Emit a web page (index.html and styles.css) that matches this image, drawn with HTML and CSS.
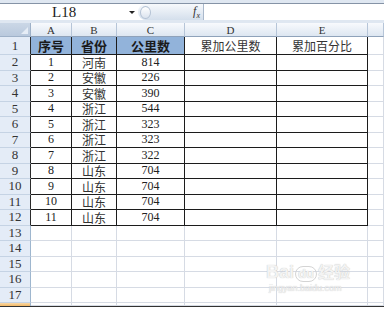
FILE: index.html
```html
<!DOCTYPE html>
<html>
<head>
    <title>Sheet1</title>
    <link rel="stylesheet" href="styles.css">
</head>
<body>
    <div class="bar">
        <div class="bar-inner">
            <div class="namebox">L18</div>
            <div class="drop"><span class="arrow"></span></div>
            <div class="ctrl">
                <span class="knob"></span>
                <span class="fx"><i>f</i><sub>x</sub></span>
            </div>
            <div class="input"></div>
        </div>
    </div>

    <div class="sheet">
        <div class="corner"><span class="tri"></span></div>
        <div class="ch">A</div><div class="ch">B</div><div class="ch">C</div><div class="ch">D</div><div class="ch">E</div><div class="ch"></div>

        <div class="rh edge">1</div><div class="c hd">序号</div><div class="c hd">省份</div><div class="c hd">公里数</div><div class="c t cn">累加公里数</div><div class="c t cn">累加百分比</div><div class="c"></div>
        <div class="rh edge">2</div><div class="c t">1</div><div class="c t cn">河南</div><div class="c t">814</div><div class="c t"></div><div class="c t"></div><div class="c"></div>
        <div class="rh edge">3</div><div class="c t">2</div><div class="c t cn">安徽</div><div class="c t">226</div><div class="c t"></div><div class="c t"></div><div class="c"></div>
        <div class="rh edge">4</div><div class="c t">3</div><div class="c t cn">安徽</div><div class="c t">390</div><div class="c t"></div><div class="c t"></div><div class="c"></div>
        <div class="rh edge">5</div><div class="c t">4</div><div class="c t cn">浙江</div><div class="c t">544</div><div class="c t"></div><div class="c t"></div><div class="c"></div>
        <div class="rh edge">6</div><div class="c t">5</div><div class="c t cn">浙江</div><div class="c t">323</div><div class="c t"></div><div class="c t"></div><div class="c"></div>
        <div class="rh edge">7</div><div class="c t">6</div><div class="c t cn">浙江</div><div class="c t">323</div><div class="c t"></div><div class="c t"></div><div class="c"></div>
        <div class="rh edge">8</div><div class="c t">7</div><div class="c t cn">浙江</div><div class="c t">322</div><div class="c t"></div><div class="c t"></div><div class="c"></div>
        <div class="rh edge">9</div><div class="c t">8</div><div class="c t cn">山东</div><div class="c t">704</div><div class="c t"></div><div class="c t"></div><div class="c"></div>
        <div class="rh edge">10</div><div class="c t">9</div><div class="c t cn">山东</div><div class="c t">704</div><div class="c t"></div><div class="c t"></div><div class="c"></div>
        <div class="rh edge">11</div><div class="c t">10</div><div class="c t cn">山东</div><div class="c t">704</div><div class="c t"></div><div class="c t"></div><div class="c"></div>
        <div class="rh edge">12</div><div class="c t">11</div><div class="c t cn">山东</div><div class="c t">704</div><div class="c t"></div><div class="c t"></div><div class="c"></div>
        <div class="rh">13</div><div class="c"></div><div class="c"></div><div class="c"></div><div class="c"></div><div class="c"></div><div class="c"></div>
        <div class="rh">14</div><div class="c"></div><div class="c"></div><div class="c"></div><div class="c"></div><div class="c"></div><div class="c"></div>
        <div class="rh">15</div><div class="c"></div><div class="c"></div><div class="c"></div><div class="c"></div><div class="c"></div><div class="c"></div>
        <div class="rh">16</div><div class="c"></div><div class="c"></div><div class="c"></div><div class="c"></div><div class="c"></div><div class="c"></div>
        <div class="rh">17</div><div class="c"></div><div class="c"></div><div class="c"></div><div class="c"></div><div class="c"></div><div class="c"></div>
        <div class="rh sel"></div><div class="c"></div><div class="c"></div><div class="c"></div><div class="c"></div><div class="c"></div><div class="c"></div>
    </div>

    <div class="watermark">
        <div class="wm-logo">Bai<span class="wm-du">du</span><span class="wm-cn">经验</span></div>
        <div class="wm-url">jingyan.baidu.com</div>
    </div>
</body>
</html>
```

FILE: styles.css
```css
body {
    margin: 0;
    width: 384px;
    height: 309px;
    overflow: hidden;
    background: #fff;
    font-family: "Liberation Serif", "Noto Sans CJK SC", serif;
    color: #222;
    position: relative;
}
.bar {
    height: 23px;
    box-sizing: border-box;
    padding-top: 3px;
    background: #dfe7f1;
}
.bar-inner {
    display: flex;
    height: 17px;
    background: #fff;
    border-top: 1px solid #8593a6;
    box-sizing: border-box;
}
.namebox {
    flex: 0 0 125px;
    text-align: left;
    font-family: "Liberation Serif", serif;
    font-size: 15px;
    line-height: 16px;
    color: #222;
    padding-left: 52px;
    box-sizing: border-box;
}
.drop {
    flex: 0 0 13px;
    display: flex;
    align-items: center;
    justify-content: center;
}
.arrow {
    width: 0;
    height: 0;
    border-left: 3px solid transparent;
    border-right: 3px solid transparent;
    border-top: 3px solid #222;
}
.ctrl {
    flex: 0 0 65px;
    display: flex;
    align-items: center;
    justify-content: space-between;
    background: linear-gradient(#f7f9fc, #d4dfec);
    border-radius: 8px 0 0 8px;
    padding: 0 3px 0 2px;
    box-sizing: border-box;
}
.knob {
    width: 11px;
    height: 13px;
    border-radius: 50%;
    border: 1px solid #b4c2d4;
    background: linear-gradient(#ffffff, #dbe3ee);
    box-sizing: border-box;
}
.fx {
    font-size: 12px;
    color: #333;
}
.fx sub {
    font-size: 8px;
    font-style: italic;
}
.input {
    flex: 1;
    border-left: 1px solid #a9b8cb;
    background: #fff;
}
.sheet {
    display: grid;
    grid-template-columns: 31px 41px 45px 68px 92px 91px 1fr;
    grid-template-rows: 14px 18px repeat(16, 15.5px) 3px;
    border-bottom: 1px solid #333;
}
.sheet > div {
    box-sizing: border-box;
    display: flex;
    align-items: center;
    justify-content: center;
    overflow: hidden;
}
.corner {
    background: linear-gradient(#cbd7e6, #b9c9dd);
    border-right: 1px solid #9eb1c8;
    border-bottom: 1px solid #9eb1c8;
    position: relative;
}
.tri {
    position: absolute;
    right: 2px;
    bottom: 2px;
    width: 0;
    height: 0;
    border-left: 7px solid transparent;
    border-bottom: 7px solid #e6edf6;
}
.ch {
    background: linear-gradient(#f8fafd, #dde6f1);
    border-right: 1px solid #b6c5d8;
    border-bottom: 1px solid #8fa2ba;
    font-size: 11px;
    color: #333;
}
.rh {
    background: #e4ecf7;
    border-right: 1px solid #9eb6ce;
    border-bottom: 1px solid #c5d3e4;
    font-size: 13px;
    color: #333;
}
.rh.edge {
    border-right-color: #2a2a2a;
}
.rh.sel {
    background: linear-gradient(#f9d9a8, #f3b866);
    border-bottom: none;
}
.c {
    border-right: 1px solid #d6dbe4;
    border-bottom: 1px solid #d6dbe4;
    font-size: 12px;
    color: #222;
}
.c.t {
    border-right-color: #1c1c1c;
    border-bottom-color: #1c1c1c;
}
.c.hd {
    background: #92b3da;
    border-right: 1px solid #1c1c1c;
    border-bottom: 1px solid #1c1c1c;
    font-family: "Noto Sans CJK SC", sans-serif;
    font-weight: bold;
    font-size: 13px;
    color: #1a1a1a;
}
.cn {
    font-family: "Noto Sans CJK SC", sans-serif;
    font-size: 12px;
    color: #333;
}
.watermark {
    position: absolute;
    left: 266px;
    top: 262px;
    color: #f3f3f3;
    text-shadow: 0 0 1px #b9b9b9;
    font-family: "Liberation Sans", "Noto Sans CJK SC", sans-serif;
    pointer-events: none;
}
.wm-logo {
    font-size: 18px;
    font-weight: bold;
    line-height: 20px;
}
.wm-du {
    display: inline-block;
    border: 1px solid #d4d4d4;
    border-radius: 9px;
    font-size: 13px;
    line-height: 14px;
    padding: 0 2px;
    margin: 0 1px;
}
.wm-cn {
    font-size: 16px;
}
.wm-url {
    font-size: 9px;
    line-height: 11px;
    margin-left: 3px;
}
```
